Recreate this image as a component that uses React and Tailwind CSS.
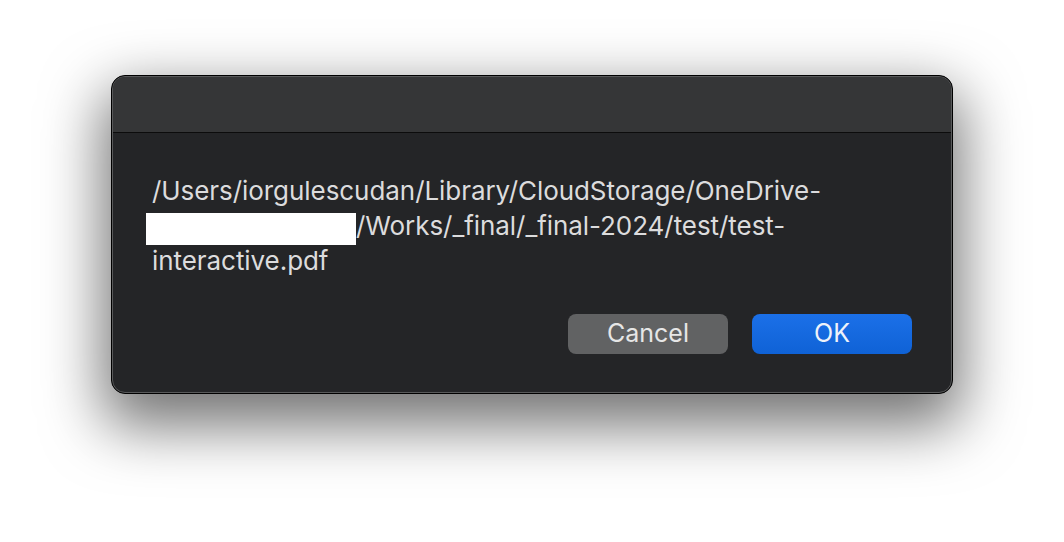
export default function App() {
  return (
    <div className="w-[1064px] h-[542px] bg-white overflow-hidden pt-[75px] pl-[111px]" style={{ fontFamily: 'Inter, "Noto Sans", sans-serif' }}>
      <div className="w-[842px] h-[319px] rounded-[14px] border border-black bg-[#242527] shadow-[0_24px_60px_8px_rgba(0,0,0,0.55)] flex flex-col overflow-hidden">
        <div className="h-full flex flex-col rounded-[13px] border border-[#58595a] overflow-hidden">
          <div className="h-[56px] shrink-0 bg-[#353637] border-b border-[#0c0c0c]" />
          <div className="flex-1 flex flex-col px-[39px] pt-[40px]">
            <div className="text-[26px] leading-[35px] text-[#dcdcdd] tracking-[-0.06px]">
              <div>/Users/iorgulescudan/Library/CloudStorage/OneDrive-</div>
              <div className="flex items-start">
                <span className="inline-block w-[210px] h-[32px] bg-white -ml-[6px] mt-[5px] -mb-[2px]" />
                <span>/Works/_final/_final-2024/test/test-</span>
              </div>
              <div>interactive.pdf</div>
            </div>
            <div className="flex justify-end gap-[24px] mt-[36px]">
              <button className="w-[160px] h-[40px] rounded-[8px] bg-[#616263] text-[25px] text-[#e6e6e6] flex items-center justify-center">
                Cancel
              </button>
              <button className="w-[160px] h-[40px] rounded-[8px] bg-gradient-to-b from-[#1b70e8] to-[#0f62d6] text-[25px] text-[#eef2fa] flex items-center justify-center">
                OK
              </button>
            </div>
          </div>
        </div>
      </div>
    </div>
  );
}
